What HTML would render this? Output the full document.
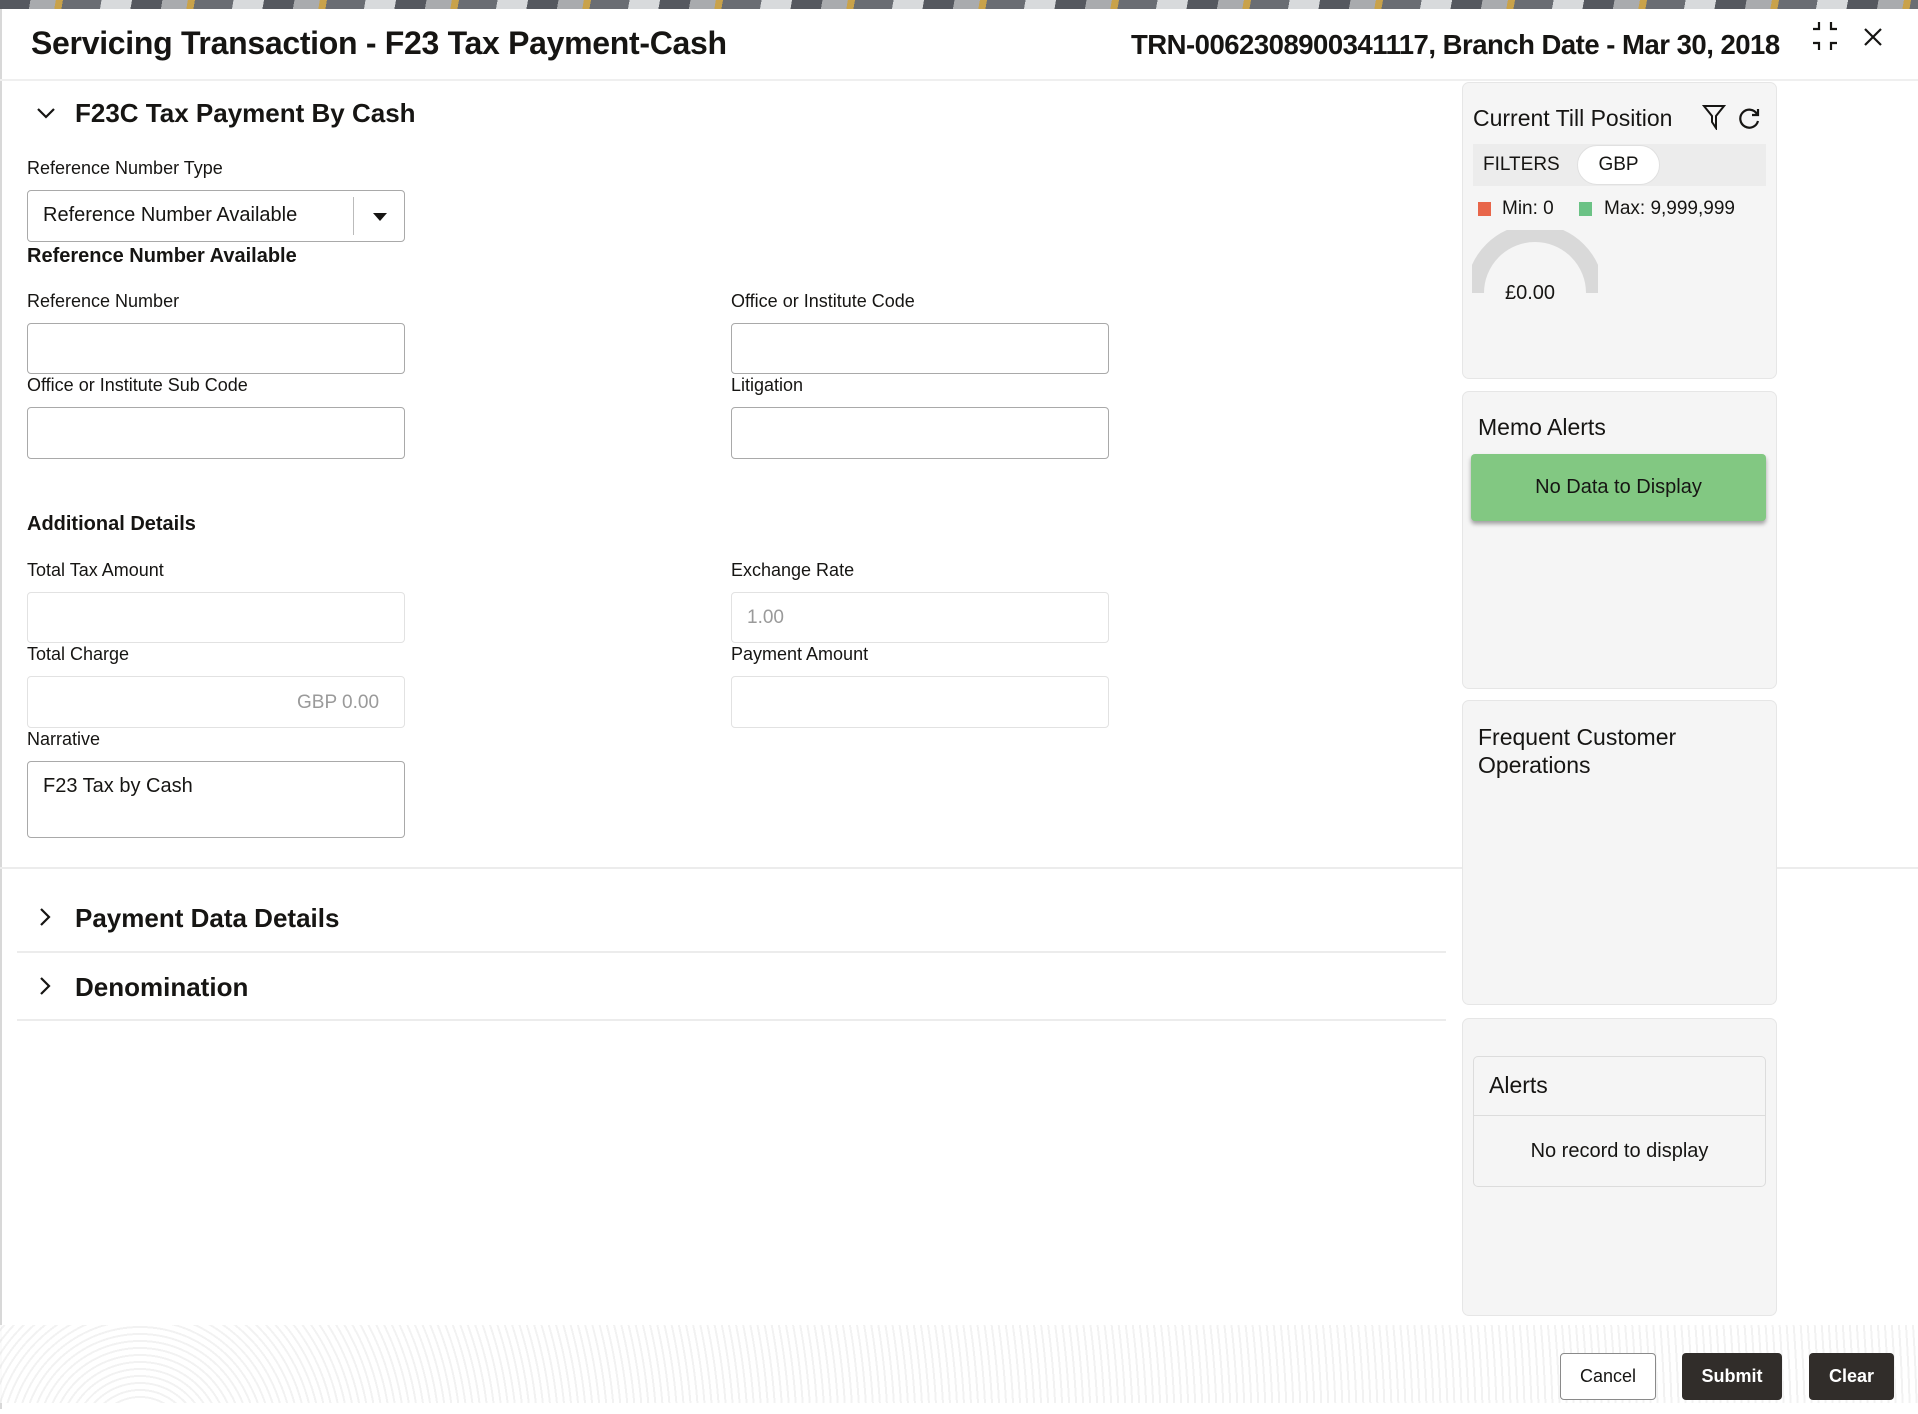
<!DOCTYPE html>
<html><head><meta charset="utf-8"><style>
*{box-sizing:border-box;margin:0;padding:0}
body{width:1918px;height:1414px;position:relative;overflow:hidden;background:#fff;font-family:"Liberation Sans",sans-serif;color:#161513}
.a{position:absolute;white-space:nowrap}
.lbl{font-size:18px;color:#161513}
.in{position:absolute;border:1px solid #a9a9a9;border-radius:4px;background:#fff}
.dis{border-color:#e2e2e2}
.card{position:absolute;left:1462px;width:315px;background:#f5f5f5;border:1px solid #e6e6e6;border-radius:7px}
.h22{font-size:23px;color:#161513}
.btn{position:absolute;top:1353px;height:47px;border-radius:4px;font-size:18px;font-weight:bold;display:flex;align-items:center;justify-content:center}
</style></head><body>
<div class="a" style="left:0;top:0;width:1918px;height:9px;background:repeating-linear-gradient(100deg,#55585f 0 30px,#a9abae 30px 55px,#c9a24a 55px 62px,#6a6d73 62px 100px,#d8dadc 100px 130px)"></div>
<div class="a" style="left:0;top:9px;width:2px;height:1400px;background:#d8d8d8"></div>
<div class="a" style="left:0;top:1325px;width:1918px;height:78px;background:repeating-radial-gradient(circle at 140px 120px,#fff 0 5px,#f1f1f1 5px 7px);opacity:.9"></div>

<div class="a" style="left:31px;top:25px;font-size:32px;font-weight:bold;letter-spacing:-0.3px">Servicing Transaction - F23 Tax Payment-Cash</div>
<div class="a" style="left:1131px;top:29px;font-size:27.5px;font-weight:bold;letter-spacing:-0.5px">TRN-0062308900341117, Branch Date - Mar 30, 2018</div>
<svg class="a" style="left:1810px;top:20px" width="30" height="32" viewBox="0 0 30 32" fill="none" stroke="#161513" stroke-width="2.2"><path d="M9 2v7H3M21 2v7h6M9 30v-7H3M21 30v-7h6"/></svg>
<svg class="a" style="left:1863px;top:27px" width="20" height="20" viewBox="0 0 20 20" stroke="#161513" stroke-width="2.2"><path d="M2 2l16 16M18 2L2 18"/></svg>
<div class="a" style="left:0;top:79px;width:1918px;height:2px;background:#efefef"></div>

<svg class="a" style="left:36px;top:106px" width="20" height="14" viewBox="0 0 20 14" fill="none" stroke="#161513" stroke-width="2.2"><path d="M2 3l8 8 8-8"/></svg>
<div class="a" style="left:75px;top:98px;font-size:26px;font-weight:bold">F23C Tax Payment By Cash</div>

<div class="a lbl" style="left:27px;top:158px">Reference Number Type</div>
<div class="in" style="left:27px;top:190px;width:378px;height:52px"></div>
<div class="a" style="left:43px;top:204px;font-size:20px">Reference Number Available</div>
<div class="a" style="left:353px;top:197px;width:1px;height:38px;background:#bbb"></div>
<div class="a" style="left:373px;top:213px;width:0;height:0;border-left:7px solid transparent;border-right:7px solid transparent;border-top:8px solid #161513"></div>
<div class="a" style="left:27px;top:245px;font-size:20px;font-weight:bold">Reference Number Available</div>

<div class="a lbl" style="left:27px;top:291px">Reference Number</div>
<div class="in" style="left:27px;top:323px;width:378px;height:51px"></div>
<div class="a lbl" style="left:731px;top:291px">Office or Institute Code</div>
<div class="in" style="left:731px;top:323px;width:378px;height:51px"></div>
<div class="a lbl" style="left:27px;top:375px">Office or Institute Sub Code</div>
<div class="in" style="left:27px;top:407px;width:378px;height:52px"></div>
<div class="a lbl" style="left:731px;top:375px">Litigation</div>
<div class="in" style="left:731px;top:407px;width:378px;height:52px"></div>

<div class="a" style="left:27px;top:513px;font-size:20px;font-weight:bold">Additional Details</div>
<div class="a lbl" style="left:27px;top:560px">Total Tax Amount</div>
<div class="in dis" style="left:27px;top:592px;width:378px;height:51px"></div>
<div class="a lbl" style="left:731px;top:560px">Exchange Rate</div>
<div class="in dis" style="left:731px;top:592px;width:378px;height:51px"></div>
<div class="a" style="left:747px;top:607px;font-size:19px;color:#9a9a9a">1.00</div>
<div class="a lbl" style="left:27px;top:644px">Total Charge</div>
<div class="in dis" style="left:27px;top:676px;width:378px;height:52px"></div>
<div class="a" style="left:297px;top:692px;font-size:19px;color:#9a9a9a">GBP 0.00</div>
<div class="a lbl" style="left:731px;top:644px">Payment Amount</div>
<div class="in dis" style="left:731px;top:676px;width:378px;height:52px"></div>
<div class="a lbl" style="left:27px;top:729px">Narrative</div>
<div class="in" style="left:27px;top:761px;width:378px;height:77px"></div>
<div class="a" style="left:43px;top:775px;font-size:20px">F23 Tax by Cash</div>

<div class="a" style="left:0;top:867px;width:1918px;height:2px;background:#ececec"></div>
<svg class="a" style="left:38px;top:907px" width="14" height="20" viewBox="0 0 14 20" fill="none" stroke="#161513" stroke-width="2.2"><path d="M3 2l8 8-8 8"/></svg>
<div class="a" style="left:75px;top:903px;font-size:26px;font-weight:bold">Payment Data Details</div>
<div class="a" style="left:17px;top:951px;width:1429px;height:2px;background:#ececec"></div>
<svg class="a" style="left:38px;top:976px" width="14" height="20" viewBox="0 0 14 20" fill="none" stroke="#161513" stroke-width="2.2"><path d="M3 2l8 8-8 8"/></svg>
<div class="a" style="left:75px;top:972px;font-size:26px;font-weight:bold">Denomination</div>
<div class="a" style="left:17px;top:1019px;width:1429px;height:2px;background:#ececec"></div>

<div class="card" style="top:82px;height:297px"></div>
<div class="a h22" style="left:1473px;top:105px">Current Till Position</div>
<svg class="a" style="left:1702px;top:104px" width="24" height="26" viewBox="0 0 24 26" fill="none" stroke="#161513" stroke-width="2"><path d="M2 2h20l-8 10v12l-4-6V12z"/></svg>
<svg class="a" style="left:1738px;top:106px" width="24" height="24" viewBox="0 0 24 24" fill="none" stroke="#161513" stroke-width="2.2"><path d="M19 8A9 9 0 1 0 20 15"/><path d="M20 3v6h-6"/></svg>
<div class="a" style="left:1473px;top:144px;width:293px;height:42px;background:#ececec"></div>
<div class="a" style="left:1483px;top:154px;font-size:19px">FILTERS</div>
<div class="a" style="left:1577px;top:145px;width:83px;height:40px;background:#fff;border:1px solid #e0e0e0;border-radius:20px;font-size:19px;text-align:center;line-height:38px">GBP</div>
<div class="a" style="left:1478px;top:202px;width:13px;height:14px;background:#e8664a"></div>
<div class="a" style="left:1502px;top:198px;font-size:19px">Min: 0</div>
<div class="a" style="left:1579px;top:202px;width:13px;height:14px;background:#6bc285"></div>
<div class="a" style="left:1604px;top:198px;font-size:19px">Max: 9,999,999</div>
<svg class="a" style="left:1472px;top:230px" width="126" height="66" viewBox="0 0 126 66"><path d="M3 63A60 60 0 0 1 123 63" fill="none" stroke="#d9d9d9" stroke-width="18"/></svg>
<div class="a" style="left:1505px;top:282px;font-size:20px">£0.00</div>

<div class="card" style="top:391px;height:298px"></div>
<div class="a h22" style="left:1478px;top:414px">Memo Alerts</div>
<div class="a" style="left:1471px;top:454px;width:295px;height:67px;background:#82c882;border-radius:4px;box-shadow:0 3px 4px rgba(0,0,0,.35);font-size:20px;text-align:center;line-height:67px">No Data to Display</div>

<div class="card" style="top:700px;height:305px"></div>
<div class="a h22" style="left:1478px;top:723px;line-height:28px">Frequent Customer<br>Operations</div>

<div class="card" style="top:1018px;height:298px"></div>
<div class="a" style="left:1473px;top:1056px;width:293px;height:131px;border:1px solid #dcdcdc;border-radius:5px"></div>
<div class="a" style="left:1474px;top:1115px;width:291px;height:1px;background:#dcdcdc"></div>
<div class="a" style="left:1489px;top:1072px;font-size:23px">Alerts</div>
<div class="a" style="left:1473px;top:1140px;width:293px;text-align:center;font-size:20px">No record to display</div>

<div class="btn" style="left:1560px;width:96px;border:1px solid #8a8a8a;background:#fff;color:#161513;font-weight:normal">Cancel</div>
<div class="btn" style="left:1682px;width:100px;background:#312d2a;color:#fff">Submit</div>
<div class="btn" style="left:1809px;width:85px;background:#312d2a;color:#fff">Clear</div>
</body></html>
